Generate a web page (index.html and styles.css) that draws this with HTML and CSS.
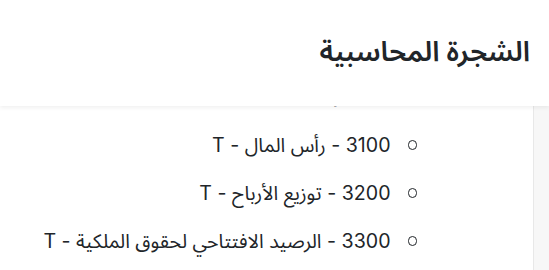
FILE: index.html
```html
<!DOCTYPE html>
<html lang="ar" dir="rtl">
<head>
<meta charset="utf-8">
<title>الشجرة المحاسبية</title>
<link rel="stylesheet" href="styles.css">
</head>
<body>
<div class="modal">
  <header class="modal-header">
    <h5 class="modal-title">الشجرة المحاسبية</h5>
  </header>
  <div class="modal-body">
    <div class="scroll-track"></div>
    <div class="tree-view">
      <ul class="tree tree-root">
        <li class="tree-item">
          <span class="label">3000 - حقوق الملكية - T</span>
          <ul class="tree tree-sub">
            <li class="tree-item"><span class="label">3100 - رأس المال - T</span></li>
            <li class="tree-item"><span class="label">3200 - توزيع الأرباح - T</span></li>
            <li class="tree-item"><span class="label">3300 - الرصيد الافتتاحي لحقوق الملكية - T</span></li>
          </ul>
        </li>
      </ul>
    </div>
  </div>
</div>
</body>
</html>
```
FILE: styles.css
```css
html, body {
  margin: 0;
  padding: 0;
  background: #ffffff;
}
body {
  font-family: Inter, "Noto Sans Arabic", "Noto Sans", "DejaVu Sans", sans-serif;
  color: #212529;
  width: 549px;
  height: 270px;
  overflow: hidden;
}
.modal {
  display: flex;
  flex-direction: column;
  height: 270px;
}
.modal-header {
  position: relative;
  z-index: 2;
  height: 106px;
  flex: 0 0 auto;
  display: flex;
  align-items: center;
  padding: 0 19px 3px 0;
  box-sizing: border-box;
  background: #ffffff;
  box-shadow: 0 2px 4px rgba(0, 0, 0, 0.06);
}
.modal-title {
  margin: 0;
  font-size: 28px;
  font-weight: 600;
  line-height: 1.2;
  color: #212529;
}
.modal-body {
  flex: 1 1 auto;
  display: flex;
  overflow: hidden;
}
.tree-view {
  flex: 1 1 auto;
  overflow: hidden;
}
.scroll-track {
  flex: 0 0 15px;
  background: #f7f7f7;
  border-left: 1px solid #e8e8e8;
}
.tree {
  list-style: none;
  margin: 0;
  padding: 0;
}
.tree-root {
  margin-top: -24px;
  padding-right: 100px;
}
.tree-sub {
  padding-right: 16px;
  padding-top: 12px;
}
.tree-item {
  font-size: 19.6px;
  line-height: 27px;
}
.tree-root > .tree-item > .label {
  display: block;
  height: 27px;
}
.tree-sub > .tree-item {
  display: flex;
  align-items: center;
  gap: 17px;
  padding: 10.5px 0;
}
.tree-sub > .tree-item::before {
  content: "";
  width: 7.5px;
  height: 7.5px;
  border: 1.6px solid #212529;
  border-radius: 50%;
  flex: 0 0 auto;
}
```
